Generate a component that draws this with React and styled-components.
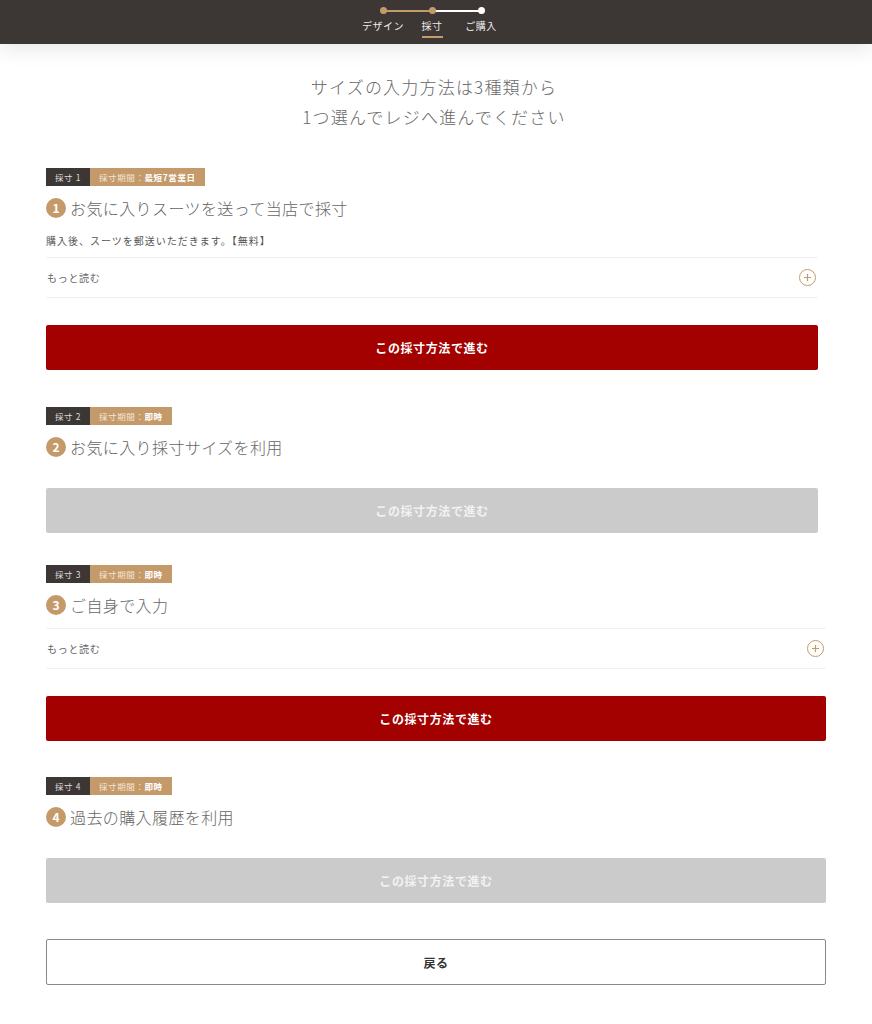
import React from "react";
import styled, { createGlobalStyle } from "styled-components";

const colors = {
  dark: "#3c3634",
  gold: "#c59a6b",
  red: "#a30000",
  gray: "#cbcbcb",
  text: "#666666",
  line: "#f0f0f0",
};

const GlobalStyle = createGlobalStyle`
  body {
    margin: 0;
    background: #fff;
    font-family: "Noto Sans CJK JP", "Noto Sans", sans-serif;
    color: ${colors.text};
  }
`;

const Header = styled.header`
  height: 44px;
  background: ${colors.dark};
  display: flex;
  justify-content: center;
  box-shadow: 0 6px 20px rgba(0, 0, 0, 0.09);
  position: relative;
`;

const Steps = styled.ol`
  list-style: none;
  margin: 0 0 0 -8px;
  padding: 0;
  display: flex;
`;

const Step = styled.li`
  width: 49px;
  display: flex;
  flex-direction: column;
  align-items: center;
  position: relative;
  padding-top: 7px;

  &::before {
    content: "";
    position: absolute;
    top: 10px;
    left: 50%;
    width: 49px;
    height: 2px;
    background: ${(p) => p.$lineColor};
    display: ${(p) => (p.$last ? "none" : "block")};
  }
`;

const Dot = styled.span`
  width: 7px;
  height: 7px;
  border-radius: 50%;
  background: ${(p) => (p.$done ? colors.gold : "#fff")};
  position: relative;
  z-index: 1;
`;

const StepLabel = styled.span`
  margin-top: 5px;
  font-size: 10px;
  line-height: 14px;
  color: #eee;
  white-space: nowrap;
  letter-spacing: 0.5px;
  padding-bottom: 3px;
  border-bottom: 2px solid ${(p) => (p.$active ? colors.gold : "transparent")};
`;

const Main = styled.main`
  padding: 0 46px 40px;
`;

const Lead = styled.h1`
  margin: 28px 0 36px;
  text-align: center;
  font-size: 17px;
  line-height: 30px;
  font-weight: 300;
  letter-spacing: 1.2px;
  color: #666;
  padding-right: 4px;
`;

const Section = styled.section`
  width: ${(p) => (p.$wide ? "780px" : "772px")};
  margin-bottom: ${(p) => p.$gap}px;
`;

const Tags = styled.div`
  display: flex;
  height: 18px;
  font-size: 8.5px;
  line-height: 18px;
  letter-spacing: 0.6px;
  white-space: nowrap;
`;

const TagDark = styled.span`
  background: ${colors.dark};
  color: #ddd;
  padding: 0 0 0 9px;
  width: 44px;
  box-sizing: border-box;
`;

const TagGold = styled.span`
  background: ${colors.gold};
  color: #f4e6d6;
  padding: 0 9px;
  b {
    color: #fff;
  }
`;

const Title = styled.h2`
  margin: 11px 0 0;
  display: flex;
  align-items: center;
  gap: 4px;
  font-size: 16px;
  font-weight: 300;
  letter-spacing: 0.4px;
  color: #666;
  line-height: 22px;
`;

const Num = styled.span`
  width: 20px;
  height: 20px;
  border-radius: 50%;
  background: ${colors.gold};
  color: #fff;
  font-size: 12px;
  font-weight: 700;
  display: flex;
  align-items: center;
  justify-content: center;
  letter-spacing: 0;
`;

const Desc = styled.p`
  margin: 13px 0 7px;
  font-size: 10px;
  line-height: 18px;
  letter-spacing: 1px;
  color: #555;
`;

const More = styled.div`
  display: flex;
  justify-content: space-between;
  align-items: center;
  height: 39px;
  margin-top: ${(p) => (p.$gap ? "12px" : "0")};
  border-top: 1px solid ${colors.line};
  border-bottom: 1px solid ${colors.line};
  padding: 0 0 0 1px;
  font-size: 10px;
  letter-spacing: 0.7px;
  color: #666;
`;

const PlusIcon = styled.span`
  width: 15px;
  height: 15px;
  margin-right: 2px;
  border: 1px solid ${colors.gold};
  border-radius: 50%;
  display: flex;
  align-items: center;
  justify-content: center;
  color: ${colors.gold};
`;

const ActionButton = styled.button`
  display: block;
  width: 100%;
  height: 45px;
  margin-top: ${(p) => p.$top}px;
  border: none;
  border-radius: 2px;
  background: ${(p) => (p.$disabled ? colors.gray : colors.red)};
  color: ${(p) => (p.$disabled ? "#f2f2f2" : "#fff")};
  font-family: inherit;
  font-size: 12px;
  font-weight: 700;
  letter-spacing: 0.6px;
  cursor: ${(p) => (p.$disabled ? "default" : "pointer")};
`;

const BackButton = styled.button`
  display: block;
  width: 780px;
  height: 46px;
  background: #fff;
  border: 1px solid #8a8a8a;
  border-radius: 2px;
  font-family: inherit;
  font-size: 12px;
  font-weight: 700;
  color: #333;
  letter-spacing: 0.5px;
`;

const Plus = () => (
  <PlusIcon>
    <svg width="9" height="9" viewBox="0 0 9 9">
      <path d="M4.5 1v7M1 4.5h7" stroke="currentColor" strokeWidth="1.2" />
    </svg>
  </PlusIcon>
);

const sections = [
  {
    tag: "採寸 1",
    period: (
      <>
        採寸期間：<b>最短7営業日</b>
      </>
    ),
    title: "お気に入りスーツを送って当店で採寸",
    desc: "購入後、スーツを郵送いただきます。【無料】",
    more: true,
    disabled: false,
    gap: 37,
  },
  {
    tag: "採寸 2",
    period: (
      <>
        採寸期間：<b>即時</b>
      </>
    ),
    title: "お気に入り採寸サイズを利用",
    disabled: true,
    gap: 32,
  },
  {
    tag: "採寸 3",
    period: (
      <>
        採寸期間：<b>即時</b>
      </>
    ),
    title: "ご自身で入力",
    more: true,
    wide: true,
    disabled: false,
    gap: 36,
  },
  {
    tag: "採寸 4",
    period: (
      <>
        採寸期間：<b>即時</b>
      </>
    ),
    title: "過去の購入履歴を利用",
    wide: true,
    disabled: true,
    gap: 36,
  },
];

const App = () => {
  return (
    <>
      <GlobalStyle />
      <Header>
        <Steps>
          <Step $lineColor={colors.gold}>
            <Dot $done />
            <StepLabel>デザイン</StepLabel>
          </Step>
          <Step $lineColor="#fff">
            <Dot $done />
            <StepLabel $active>採寸</StepLabel>
          </Step>
          <Step $last>
            <Dot />
            <StepLabel>ご購入</StepLabel>
          </Step>
        </Steps>
      </Header>
      <Main>
        <Lead>
          サイズの入力方法は3種類から
          <br />
          1つ選んでレジへ進んでください
        </Lead>
        {sections.map((s, i) => (
          <Section key={s.tag} $wide={s.wide} $gap={s.gap}>
            <Tags>
              <TagDark>{s.tag}</TagDark>
              <TagGold>{s.period}</TagGold>
            </Tags>
            <Title>
              <Num>{i + 1}</Num>
              {s.title}
            </Title>
            {s.desc && <Desc>{s.desc}</Desc>}
            {s.more && (
              <More $gap={!s.desc}>
                もっと読む
                <Plus />
              </More>
            )}
            <ActionButton $disabled={s.disabled} $top={s.more ? 27 : 30}>
              この採寸方法で進む
            </ActionButton>
          </Section>
        ))}
        <BackButton>戻る</BackButton>
      </Main>
    </>
  );
};

export default App;
